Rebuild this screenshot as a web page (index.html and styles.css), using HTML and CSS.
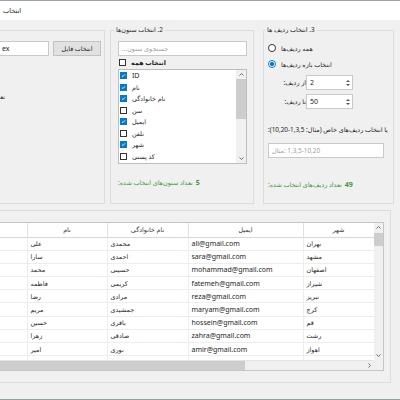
FILE: index.html
```html
<!DOCTYPE html>
<html lang="fa">
<head>
    <meta charset="UTF-8">
    <meta name="viewport" content="width=device-width, initial-scale=1.0">
    <title>انتخاب</title>
    <link rel="stylesheet" href="styles.css">
</head>
<body>
    <div class="titlebar"><span dir="rtl">انتخاب</span></div>

    <div class="top-row">
        <!-- 1. file -->
        <div class="group group-file">
            <div class="file-row">
                <input type="text" class="textbox file-path" value="ex" readonly>
                <button type="button" class="btn">انتخاب فایل</button>
            </div>
            <div class="file-info" dir="rtl">تعداد کل ردیف‌ها: 50</div>
        </div>

        <!-- 2. columns -->
        <fieldset class="group group-columns">
            <legend dir="rtl">2. انتخاب ستون‌ها</legend>
            <input type="text" class="textbox search" dir="rtl" placeholder="جستجوی ستون...">
            <label class="check-all">
                <span class="check"></span>
                <span dir="rtl">انتخاب همه</span>
            </label>
            <div class="listbox">
                <ul class="list-items">
                    <li><span class="check on"><svg viewBox="0 0 7 7"><path d="M1.3 3.6 2.8 5 5.7 1.9"/></svg></span><span class="latin">ID</span></li>
                    <li><span class="check on"><svg viewBox="0 0 7 7"><path d="M1.3 3.6 2.8 5 5.7 1.9"/></svg></span><span dir="rtl">نام</span></li>
                    <li><span class="check on"><svg viewBox="0 0 7 7"><path d="M1.3 3.6 2.8 5 5.7 1.9"/></svg></span><span dir="rtl">نام خانوادگی</span></li>
                    <li><span class="check"></span><span dir="rtl">سن</span></li>
                    <li><span class="check on"><svg viewBox="0 0 7 7"><path d="M1.3 3.6 2.8 5 5.7 1.9"/></svg></span><span dir="rtl">ایمیل</span></li>
                    <li><span class="check"></span><span dir="rtl">تلفن</span></li>
                    <li><span class="check on"><svg viewBox="0 0 7 7"><path d="M1.3 3.6 2.8 5 5.7 1.9"/></svg></span><span dir="rtl">شهر</span></li>
                    <li><span class="check"></span><span dir="rtl">کد پستی</span></li>
                </ul>
                <div class="vscroll list-scroll">
                    <span class="arrow"><svg viewBox="0 0 5 3"><path d="M0.5 2.5 2.5 0.5 4.5 2.5"/></svg></span>
                    <span class="thumb"></span>
                    <span class="arrow"><svg viewBox="0 0 5 3"><path d="M0.5 0.5 2.5 2.5 4.5 0.5"/></svg></span>
                </div>
            </div>
            <div class="count"><span dir="rtl">تعداد ستون‌های انتخاب شده:</span><b>5</b></div>
        </fieldset>

        <!-- 3. rows -->
        <fieldset class="group group-rows">
            <legend dir="rtl">3. انتخاب ردیف ها</legend>
            <label class="radio-row"><span class="radio"></span><span dir="rtl">همه ردیف‌ها</span></label>
            <label class="radio-row"><span class="radio on"></span><span dir="rtl">انتخاب بازه ردیف‌ها</span></label>
            <div class="range">
                <span dir="rtl">از ردیف:</span>
                <div class="spin">
                    <span class="latin">2</span>
                    <span class="spin-btns">
                        <svg viewBox="0 0 4 2"><path d="M0 2 2 0 4 2z"/></svg>
                        <svg viewBox="0 0 4 2"><path d="M0 0 2 2 4 0z"/></svg>
                    </span>
                </div>
                <span dir="rtl">تا ردیف:</span>
                <div class="spin">
                    <span class="latin">50</span>
                    <span class="spin-btns">
                        <svg viewBox="0 0 4 2"><path d="M0 2 2 0 4 2z"/></svg>
                        <svg viewBox="0 0 4 2"><path d="M0 0 2 2 4 0z"/></svg>
                    </span>
                </div>
            </div>
            <div class="custom-label" dir="rtl">یا انتخاب ردیف‌های خاص (مثال: 1,3,5-10,20):</div>
            <input type="text" class="textbox custom-input" placeholder="مثال:&lrm; 1,3,5-10,20">
            <div class="count"><span dir="rtl">تعداد ردیف‌های انتخاب شده:</span><b>49</b></div>
        </fieldset>
    </div>

    <!-- preview grid -->
    <div class="group grid-group">
        <div class="grid">
            <div class="grid-body">
                <table>
                    <colgroup>
                        <col class="c-id">
                        <col class="c-name">
                        <col class="c-family">
                        <col class="c-email">
                        <col class="c-city">
                    </colgroup>
                    <thead>
                        <tr>
                            <th></th>
                            <th dir="rtl">نام</th>
                            <th dir="rtl">نام خانوادگی</th>
                            <th dir="rtl">ایمیل</th>
                            <th dir="rtl">شهر</th>
                        </tr>
                    </thead>
                    <tbody>
                        <tr><td></td><td>علی</td><td>محمدی</td><td class="mail">ali@gmail.com</td><td>تهران</td></tr>
                        <tr><td></td><td>سارا</td><td>احمدی</td><td class="mail">sara@gmail.com</td><td>مشهد</td></tr>
                        <tr><td></td><td>محمد</td><td>حسینی</td><td class="mail">mohammad@gmail.com</td><td>اصفهان</td></tr>
                        <tr><td></td><td>فاطمه</td><td>کریمی</td><td class="mail">fatemeh@gmail.com</td><td>شیراز</td></tr>
                        <tr><td></td><td>رضا</td><td>مرادی</td><td class="mail">reza@gmail.com</td><td>تبریز</td></tr>
                        <tr><td></td><td>مریم</td><td>جمشیدی</td><td class="mail">maryam@gmail.com</td><td>کرج</td></tr>
                        <tr><td></td><td>حسین</td><td>باقری</td><td class="mail">hossein@gmail.com</td><td>قم</td></tr>
                        <tr><td></td><td>زهرا</td><td>صادقی</td><td class="mail">zahra@gmail.com</td><td>رشت</td></tr>
                        <tr><td></td><td>امیر</td><td>نوری</td><td class="mail">amir@gmail.com</td><td>اهواز</td></tr>
                        <tr><td></td><td></td><td></td><td></td><td></td></tr>
                    </tbody>
                </table>
            </div>
            <div class="vscroll grid-vscroll">
                <span class="arrow"><svg viewBox="0 0 5 3"><path d="M0.5 2.5 2.5 0.5 4.5 2.5"/></svg></span>
                <span class="thumb"></span>
                <span class="arrow"><svg viewBox="0 0 5 3"><path d="M0.5 0.5 2.5 2.5 4.5 0.5"/></svg></span>
            </div>
            <div class="hscroll">
                <span class="thumb"></span>
                <span class="arrow"><svg viewBox="0 0 3 5"><path d="M0.5 0.5 2.5 2.5 0.5 4.5"/></svg></span>
            </div>
            <div class="corner"></div>
        </div>
    </div>
</body>
</html>
```

FILE: styles.css
```css
* {
    box-sizing: border-box;
}

body {
    margin: 0;
    width: 400px;
    height: 400px;
    overflow: hidden;
    background-color: #f0f0f0;
    font-family: "Noto Sans", "DejaVu Sans", sans-serif;
    font-size: 6.4px;
    color: #1e1e1e;
    border-bottom: 1px solid #8aa89a;
}

.latin,
.mail {
    font-size: 7px;
}

.titlebar {
    height: 20px;
    background-color: #fff;
    border-top: 1px solid #99a4a8;
    padding-left: 3px;
    display: flex;
    align-items: center;
    font-size: 6.6px;
}

/* group boxes */
.top-row {
    display: flex;
    align-items: flex-start;
    margin: 5px 0 0 -4px;
}

.group {
    margin: 0;
    border: 1px solid #dcdcdc;
    min-width: 0;
}

.group legend {
    padding: 0 2px;
    line-height: 10px;
}

.group-file {
    width: 109px;
    height: 174px;
    margin-top: 5px;
    padding: 10px 3px 0 2px;
}

.group-columns {
    width: 144px;
    height: 179px;
    margin-left: 5px;
    padding: 6px 6px 0 7px;
}

.group-columns legend {
    margin-left: -4px;
}

.group-rows {
    width: 131px;
    height: 179px;
    margin-left: 9px;
    padding: 8px 0 0 4px;
}

.group-rows legend {
    margin-left: -3px;
}

/* inputs */
.textbox {
    display: block;
    height: 15px;
    margin: 0;
    padding: 0 3px;
    border: 1px solid #c9c9c9;
    background-color: #fff;
    font: inherit;
    color: #1e1e1e;
    outline: none;
}

.textbox::placeholder {
    color: #a0a0a0;
}

.btn {
    height: 15px;
    width: 48px;
    margin: 0;
    padding: 0;
    border: 1px solid #c2c2c2;
    background-color: #e1e1e1;
    font: inherit;
    color: #1e1e1e;
}

.file-row {
    display: flex;
    gap: 4px;
}

.file-path {
    flex: 1;
    min-width: 0;
    padding-left: 2px;
    font-size: 7px;
}

.file-info {
    margin: 36px 96px 0 0;
    line-height: 10px;
    white-space: nowrap;
}

.search {
    width: 129px;
    text-align: left;
}

.check-all {
    display: flex;
    align-items: center;
    gap: 5px;
    height: 11px;
    margin-top: 1px;
    padding-left: 1px;
    font-weight: bold;
}

.check {
    flex: none;
    width: 7px;
    height: 7px;
    border: 1px solid #333;
    background-color: #fff;
    display: flex;
}

.check.on {
    border-color: #0078d7;
    background-color: #0078d7;
}

.check svg {
    width: 5px;
    height: 5px;
    fill: none;
    stroke: #fff;
    stroke-width: 1.2;
}

/* list box */
.listbox {
    display: flex;
    width: 129px;
    height: 95px;
    margin-top: 1px;
    border: 1px solid #bdbdbd;
    background-color: #fff;
}

.list-items {
    flex: 1;
    margin: 0;
    padding: 0 0 0 1px;
    list-style: none;
}

.list-items li {
    display: flex;
    align-items: center;
    gap: 5px;
    height: 11.5px;
}

.vscroll {
    display: flex;
    flex-direction: column;
    align-items: center;
    background-color: #f0f0f0;
}

.vscroll .arrow,
.hscroll .arrow {
    display: flex;
    align-items: center;
    justify-content: center;
    flex: none;
    width: 9px;
    height: 9px;
}

.arrow svg {
    width: 5px;
    height: 3px;
    fill: none;
    stroke: #6a6a6a;
    stroke-width: 1;
}

.hscroll .arrow svg {
    width: 3px;
    height: 5px;
}

.vscroll .thumb {
    width: 100%;
    background-color: #cdcdcd;
}

.vscroll .arrow:last-child {
    margin-top: auto;
}

.list-scroll {
    width: 10px;
}

.list-scroll .thumb {
    height: 40px;
}

.count {
    display: flex;
    gap: 3px;
    margin-top: 14px;
    line-height: 10px;
    color: #3a9a3a;
    white-space: nowrap;
}

.count b {
    font-size: 7px;
}

/* row selection */
.radio-row {
    display: flex;
    align-items: center;
    gap: 5px;
    height: 10px;
    margin-bottom: 6px;
}

.radio {
    width: 8px;
    height: 8px;
    border: 1px solid #333;
    border-radius: 50%;
    background-color: #fff;
}

.radio.on {
    border-color: #0078d7;
    background: radial-gradient(circle, #0078d7 0 1.8px, #fff 2.3px);
}

.range {
    display: grid;
    grid-template-columns: 25px 47px;
    row-gap: 4px;
    align-items: center;
    margin-left: 13px;
}

.spin {
    display: flex;
    align-items: center;
    justify-content: space-between;
    height: 15px;
    padding: 0 1px 0 3px;
    border: 1px solid #c9c9c9;
    background-color: #fff;
}

.spin-btns {
    display: flex;
    flex-direction: column;
    gap: 2px;
    width: 7px;
    align-items: center;
}

.spin-btns svg {
    width: 4px;
    height: 2px;
    fill: #555;
}

.custom-label {
    margin-top: 16px;
    width: max-content;
    line-height: 10px;
    white-space: nowrap;
}

.custom-input {
    width: 116px;
    margin-top: 8px;
}

.group-rows .count {
    margin-top: 22px;
}

/* data grid */
.grid-group {
    width: 471px;
    height: 173px;
    margin: 6px 0 0 -80px;
    padding: 11px 6px 0 9px;
}

.grid {
    display: grid;
    grid-template-columns: 443px 9px;
    grid-template-rows: 137px 10px;
    width: 454px;
    border: 1px solid #c6c6c6;
    background-color: #fff;
}

.grid-body {
    overflow: hidden;
}

table {
    width: 443px;
    border-collapse: collapse;
    table-layout: fixed;
}

.c-id { width: 96px; }
.c-name { width: 80px; }
.c-family { width: 81px; }
.c-email { width: 115px; }
.c-city { width: 71px; }

th, td {
    padding: 0 3px;
    overflow: hidden;
    white-space: nowrap;
    text-align: left;
    font-weight: normal;
}

th {
    height: 14px;
    text-align: center;
    border-right: 1px solid #e0e0e0;
    border-bottom: 1px solid #d6d6d6;
    color: #333;
}

td {
    height: 13.2px;
    border-right: 1px solid #ededed;
    border-bottom: 1px solid #ededed;
}

.grid-vscroll .thumb {
    height: 13px;
    margin-top: 1px;
}

.hscroll {
    display: flex;
    background-color: #f0f0f0;
    border-top: 1px solid #e4e4e4;
}

.hscroll .thumb {
    width: 314px;
    background-color: #cdcdcd;
}

.hscroll .arrow {
    margin-left: auto;
}

.corner {
    background-color: #f0f0f0;
}
```
